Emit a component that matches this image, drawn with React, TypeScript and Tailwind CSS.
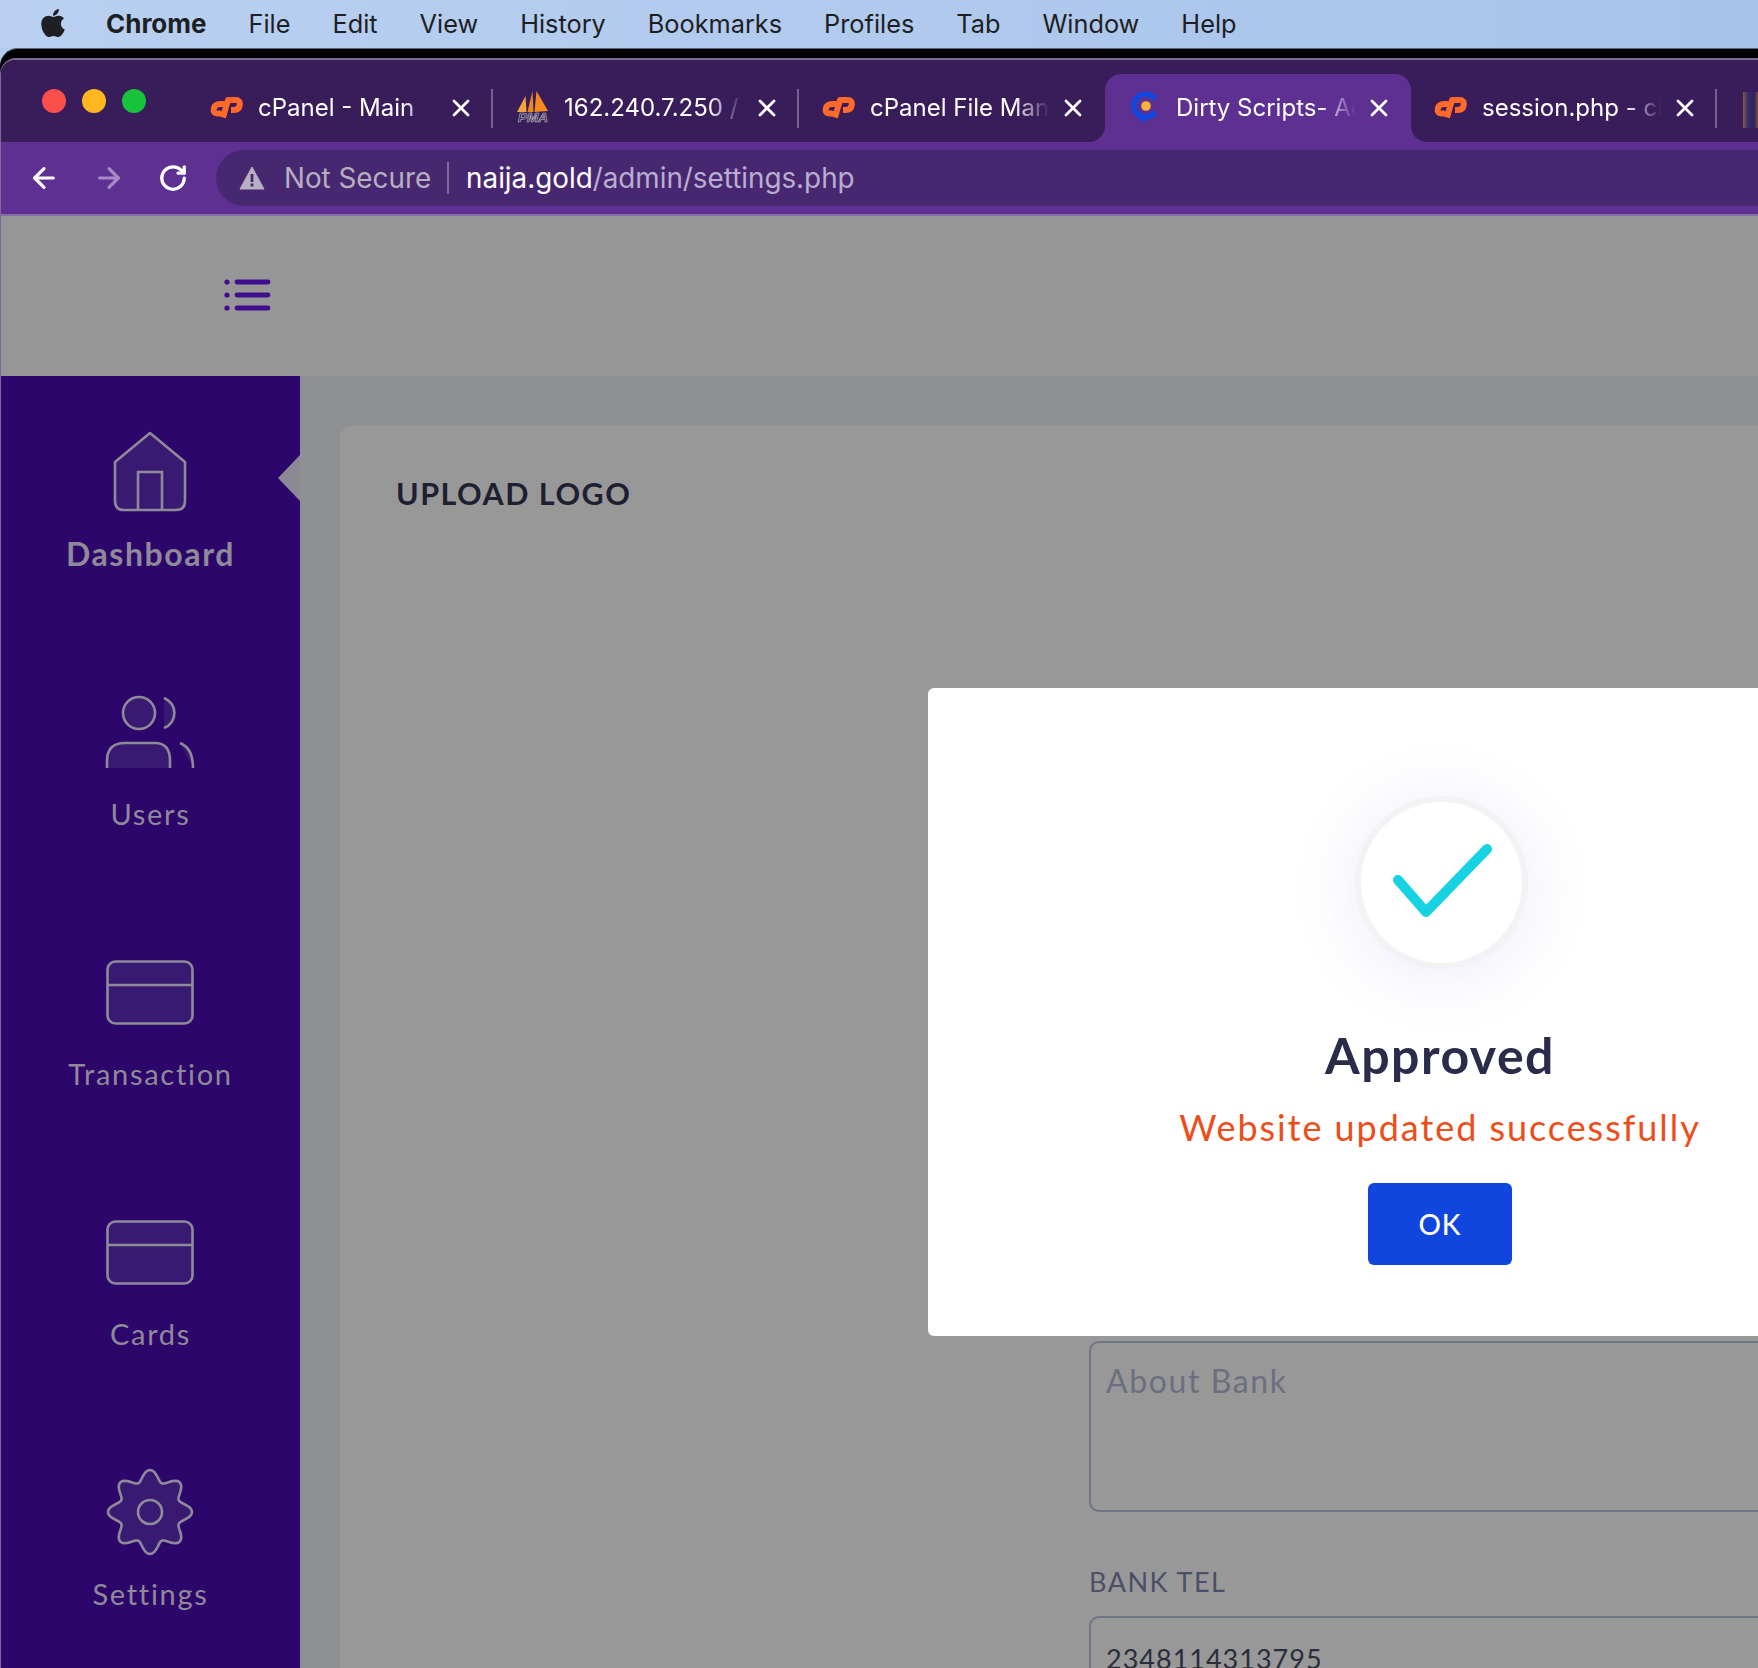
import React from "react";
import { FaApple } from "react-icons/fa";
import { ArrowLeft, ArrowRight, RotateCw } from "lucide-react";

const menu = ["File", "Edit", "View", "History", "Bookmarks", "Profiles", "Tab", "Window", "Help"];

function CloseX() {
  return (
    <svg width="18" height="18" viewBox="0 0 18 18" className="shrink-0">
      <path d="M2 2 L16 16 M16 2 L2 16" stroke="#fff" strokeWidth="2.8" strokeLinecap="round" />
    </svg>
  );
}

function CpIcon() {
  return (
    <svg width="34" height="24" viewBox="0 0 34 24" className="shrink-0">
      <path d="M13 8 H10 Q5 8 3.8 12.5 Q2.8 17.5 8 17.5 H9.5" fill="none" stroke="#ff6a2b" strokeWidth="6" strokeLinecap="round" />
      <path d="M13 21.5 L18 4 H25.5 Q30.5 4 29.8 9 Q29 14 24 14 H21" fill="none" stroke="#ff6a2b" strokeWidth="6" strokeLinejoin="round" />
    </svg>
  );
}

function PmaIcon() {
  return (
    <svg width="34" height="34" viewBox="0 0 34 34" className="shrink-0">
      <path d="M1 21 L9.5 5 L10.5 21Z" fill="#f5a33c" />
      <path d="M11.5 21 L16.5 0 L17.5 21Z" fill="#e88a1e" />
      <path d="M18.5 21 L20.5 0 L32 20Z" fill="#f58a1f" />
      <text x="17" y="31" textAnchor="middle" fontSize="13.5" fontStyle="italic" fontWeight="700" fill="#2b2440" stroke="#c9c4d2" strokeWidth="0.6" fontFamily="Liberation Sans, sans-serif">PMA</text>
    </svg>
  );
}

function CIcon() {
  return (
    <svg width="28" height="32" viewBox="0 0 28 32" className="shrink-0">
      <path d="M24 7 A11.5 11.5 0 1 0 24 20" fill="none" stroke="#1146e2" strokeWidth="5.5" />
      <path d="M7 23 L11 31 L17 26Z" fill="#1146e2" />
      <circle cx="15" cy="14" r="4.8" fill="#f9b33a" />
    </svg>
  );
}

function Tab({ icon, title, active, sep = true }: { icon: React.ReactNode; title: string; active?: boolean; sep?: boolean }) {
  return (
    <div className={`relative flex h-[68px] w-[306px] shrink-0 items-center pl-[23px] pr-[22px] ${active ? "rounded-t-[16px] bg-[#5e3092]" : ""}`}>
      <div className="flex w-[34px] shrink-0 justify-center">{icon}</div>
      <div className="ml-[14px] min-w-0 flex-1 overflow-hidden whitespace-nowrap text-[24px] text-white [mask-image:linear-gradient(to_right,#000_78%,transparent_97%)]">
        {title}
      </div>
      <div className="ml-[8px] flex w-[20px] justify-center"><CloseX /></div>
      {sep && <div className="absolute right-0 top-[15px] h-[39px] w-[2px] bg-[#75608f]" />}
      {active && (
        <>
          <svg width="16" height="16" viewBox="0 0 16 16" className="absolute bottom-0 left-[-16px]"><path d="M16 0 V16 H0 A16 16 0 0 0 16 0Z" fill="#5e3092" /></svg>
          <svg width="16" height="16" viewBox="0 0 16 16" className="absolute bottom-0 right-[-16px]"><path d="M0 0 V16 H16 A16 16 0 0 1 0 0Z" fill="#5e3092" /></svg>
        </>
      )}
    </div>
  );
}

const strokeCol = "#8f8a99";
const fillCol = "#381a72";

function IconHome() {
  return (
    <svg width="76" height="82" viewBox="0 0 76 82">
      <path d="M38 2 L73 31 V70 Q73 79 64 79 H12 Q3 79 3 70 V31Z" fill={fillCol} stroke={strokeCol} strokeWidth="2.6" strokeLinejoin="round" />
      <path d="M26 79 V41 H50 V79" fill="none" stroke={strokeCol} strokeWidth="2.6" />
    </svg>
  );
}
function IconUsers() {
  return (
    <svg width="90" height="74" viewBox="0 0 90 74">
      <circle cx="34" cy="18" r="16" fill={fillCol} stroke={strokeCol} strokeWidth="2.6" />
      <path d="M59 3 A16 16 0 0 1 59 33Z" fill={fillCol} />
      <path d="M59 3 A16 16 0 0 1 59 33" fill="none" stroke={strokeCol} strokeWidth="2.6" />
      <path d="M2 73 V66 Q2 48 20 48 H50 Q65 48 65 66 V73" fill={fillCol} stroke={strokeCol} strokeWidth="2.6" />
      <path d="M75 48 Q88 53 88 73" fill={fillCol} stroke={strokeCol} strokeWidth="2.6" />
    </svg>
  );
}
function IconCard() {
  return (
    <svg width="88" height="65" viewBox="0 0 88 65">
      <rect x="1.5" y="1.5" width="85" height="62" rx="8" fill={fillCol} stroke={strokeCol} strokeWidth="2.6" />
      <path d="M1.5 25 H86.5" stroke={strokeCol} strokeWidth="2.6" />
    </svg>
  );
}
function IconGear() {
  const pts: string[] = [];
  for (let i = 0; i < 360; i += 3) {
    const t = (i * Math.PI) / 180;
    const r = 36.5 + 5.5 * Math.cos(8 * t);
    pts.push(`${(44 + r * Math.sin(t)).toFixed(2)},${(44 - r * Math.cos(t)).toFixed(2)}`);
  }
  return (
    <svg width="88" height="88" viewBox="0 0 88 88">
      <polygon points={pts.join(" ")} fill={fillCol} stroke={strokeCol} strokeWidth="2.6" strokeLinejoin="round" />
      <circle cx="44" cy="44" r="12" fill="none" stroke={strokeCol} strokeWidth="2.6" />
    </svg>
  );
}

const nav = [
  { label: "Dashboard", icon: <IconHome />, bold: true },
  { label: "Users", icon: <IconUsers /> },
  { label: "Transaction", icon: <IconCard /> },
  { label: "Cards", icon: <IconCard /> },
  { label: "Settings", icon: <IconGear /> },
];

export default function App() {
  return (
    <div className="relative h-[1668px] w-[1758px] overflow-hidden bg-[#b2caec] font-['Lato',sans-serif]">
      {/* macOS menu bar */}
      <div className="flex h-[48px] items-center bg-gradient-to-r from-[#b9d0f0] to-[#a8c3ea] pl-[37px] font-['Inter',sans-serif] text-[25.3px] text-[#1d1f24]">
        <FaApple className="mt-[-2px] text-[32px] text-[#1d1f24]" />
        <span className="ml-[37px] mt-[-2px] text-[26px] font-bold">Chrome</span>
        <div className="ml-[42px] flex gap-[42px]">
          {menu.map((m) => (
            <span key={m}>{m}</span>
          ))}
        </div>
      </div>

      {/* window */}
      <div className="rounded-tl-[18px] border-t border-[#5c6675] bg-black pt-[9px]">
        <div className="overflow-hidden rounded-tl-[16px] border-l border-t-2 border-[#7b6a92] font-['Inter',sans-serif]">
          {/* tab strip */}
          <div className="flex h-[82px] items-end bg-[#391c5a]">
            <div className="mb-[29px] ml-[41px] flex w-[145px] shrink-0 gap-[16px]">
              <div className="h-[24px] w-[24px] rounded-full bg-[#fb4f4b]" />
              <div className="h-[24px] w-[24px] rounded-full bg-[#ffb71f]" />
              <div className="h-[24px] w-[24px] rounded-full bg-[#17c33a]" />
            </div>
            <Tab icon={<CpIcon />} title="cPanel - Main" />
            <Tab icon={<PmaIcon />} title="162.240.7.250 / localhost" />
            <Tab icon={<CpIcon />} title="cPanel File Manager v3" sep={false} />
            <Tab active icon={<CIcon />} title="Dirty Scripts- Admin Panel" sep={false} />
            <Tab icon={<CpIcon />} title="session.php - cPanel" />
            <div className="mb-[14px] ml-[26px] h-[36px] w-[16px] shrink-0 bg-[linear-gradient(to_right,#8a5a40_0%,#3a2a6a_30%,#2a2560_70%,#a0582a_100%)]" />
          </div>

          {/* toolbar */}
          <div className="flex h-[74px] items-center border-b-2 border-[#8a6fa9] bg-[#5e3092] pl-[27px]">
            <ArrowLeft size={32} strokeWidth={2.4} className="text-white" />
            <ArrowRight size={32} strokeWidth={2.4} className="ml-[33px] text-[#a48dc5]" />
            <RotateCw size={30} strokeWidth={2.6} className="ml-[33px] text-white" />
            <div className="ml-[28px] flex h-[56px] flex-1 items-center rounded-l-full bg-[#472870] pl-[23px] text-[27.8px]">
              <svg width="26" height="24" viewBox="0 0 26 24">
                <path d="M13 1 L25 23 H1Z" fill="#b7b0c2" stroke="#b7b0c2" strokeLinejoin="round" />
                <rect x="11.6" y="8" width="2.8" height="8" fill="#472870" />
                <rect x="11.6" y="17.5" width="2.8" height="3" fill="#472870" />
              </svg>
              <span className="ml-[19px] mt-[2px] text-[#b5afc0]">Not Secure</span>
              <div className="ml-[16px] h-[32px] w-[2px] bg-[#7d6a99]" />
              <span className="ml-[17px] mt-[2px] text-white">naija.gold</span>
              <span className="mt-[2px] text-[#b9add0]">/admin/settings.php</span>
            </div>
          </div>

          {/* page header */}
          <div className="flex h-[160px] items-center bg-[#969696] pb-[2px] pl-[222px] shadow-[0_2px_6px_rgba(0,0,0,0.08)]">
            <svg width="48" height="36" viewBox="0 0 48 36">
              <circle cx="4" cy="5" r="2.6" fill="#3f0d8d" />
              <circle cx="4" cy="18" r="2.6" fill="#3f0d8d" />
              <circle cx="4" cy="31" r="2.6" fill="#3f0d8d" />
              <path d="M14 5 H45 M14 18 H45 M14 31 H45" stroke="#3f0d8d" strokeWidth="4.8" strokeLinecap="round" />
            </svg>
          </div>

          {/* page body */}
          <div className="flex h-[1292px] font-['Lato',sans-serif]">
            <aside className="relative w-[299px] shrink-0 bg-[#2c066a] pt-[52px]">
              {nav.map((n) => (
                <div key={n.label} className="flex h-[260px] flex-col items-center">
                  <div className="mr-[2px] flex h-[88px] items-center justify-center">{n.icon}</div>
                  <div className={`mt-[17px] leading-[42px] text-[#8f8a99] ${n.bold ? "text-[32px] font-bold tracking-[1.6px]" : "text-[29px] tracking-[1.7px]"}`}>
                    {n.label}
                  </div>
                </div>
              ))}
              <svg width="22" height="46" viewBox="0 0 22 46" className="absolute right-0 top-[79px]">
                <path d="M22 0 V46 L0 23Z" fill="#8c8995" />
              </svg>
            </aside>
            <main className="min-w-0 flex-1 overflow-hidden bg-[#8f9091] pl-[40px] pt-[50px]">
              <div className="h-[1400px] w-[1600px] rounded-[12px] bg-[#989898] pl-[56px] pt-[47px]">
                <h2 className="text-[30.5px] font-bold leading-[40px] tracking-[1.5px] text-[#1e1f30]">UPLOAD LOGO</h2>
                <div className="ml-[693px] mt-[828px]">
                  <div className="h-[171px] rounded-[10px] border-2 border-[#6f7583] px-[15px] pt-[18px] text-[32px] leading-[40px] tracking-[1.6px] text-[#6b6f80]">
                    About Bank
                  </div>
                  <div className="mt-[52px] text-[27px] leading-[36px] tracking-[1.5px] text-[#4b5067]">BANK TEL</div>
                  <div className="mt-[16px] h-[120px] rounded-[10px] border-2 border-[#6f7583] px-[15px] pt-[23px] text-[27px] leading-[36px] tracking-[1px] text-[#2a2d3a]">
                    2348114313795
                  </div>
                </div>
              </div>
            </main>
          </div>
        </div>
      </div>

      {/* modal */}
      <div className="absolute left-[928px] top-[688px] flex h-[648px] w-[1024px] flex-col items-center rounded-[6px] bg-white pt-[114px]">
        <div className="ml-[2px] flex h-[161px] w-[161px] items-center justify-center rounded-full bg-white shadow-[0_0_0_6px_#f2f3f5,0_6px_60px_14px_rgba(110,100,220,0.10)]">
          <svg width="161" height="161" viewBox="0 0 161 161">
            <path d="M37 78 L65 110 L126 47" fill="none" stroke="#16d2e3" strokeWidth="10" strokeLinecap="round" strokeLinejoin="round" />
          </svg>
        </div>
        <div className="mt-[62px] text-[50px] font-bold leading-[60px] tracking-[1.5px] text-[#2a2c4a]">Approved</div>
        <div className="mt-[18px] text-[36px] leading-[48px] tracking-[1.95px] text-[#ee4d1a]">Website updated successfully</div>
        <div className="mt-[32px] flex h-[82px] w-[144px] items-center justify-center rounded-[6px] bg-[#1046de] text-[28px] font-medium tracking-[1px] text-white">OK</div>
      </div>
    </div>
  );
}
